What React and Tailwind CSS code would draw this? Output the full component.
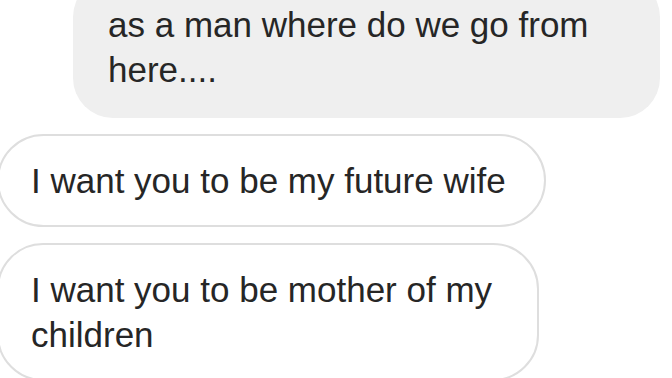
const App = () => {
  return (
    <div
      className="w-[672px] h-[378px] overflow-hidden bg-white text-[#262626] text-[35px] leading-[45px]"
      style={{ fontFamily: '"Liberation Sans", Arial, sans-serif' }}
    >
      {/* incoming message, top cut off */}
      <div className="ml-[73px] mt-[-23px] w-[587px] rounded-[40px] bg-[#efefef] px-[35px] pt-[25px] pb-[26px]">
        as a man where do we go from
        <br />
        here....
      </div>

      {/* replies */}
      <div className="ml-[-3px] mt-[16px] w-[549px] rounded-full border-2 border-[#dedede] px-[32px] py-[22px] whitespace-nowrap">
        I want you to be my future wife
      </div>

      <div className="ml-[-3px] mt-[16px] w-[542px] rounded-[46px] border-2 border-[#dedede] px-[32px] py-[22px] whitespace-nowrap">
        I want you to be mother of my
        <br />
        children
      </div>
    </div>
  );
};

export default App;
